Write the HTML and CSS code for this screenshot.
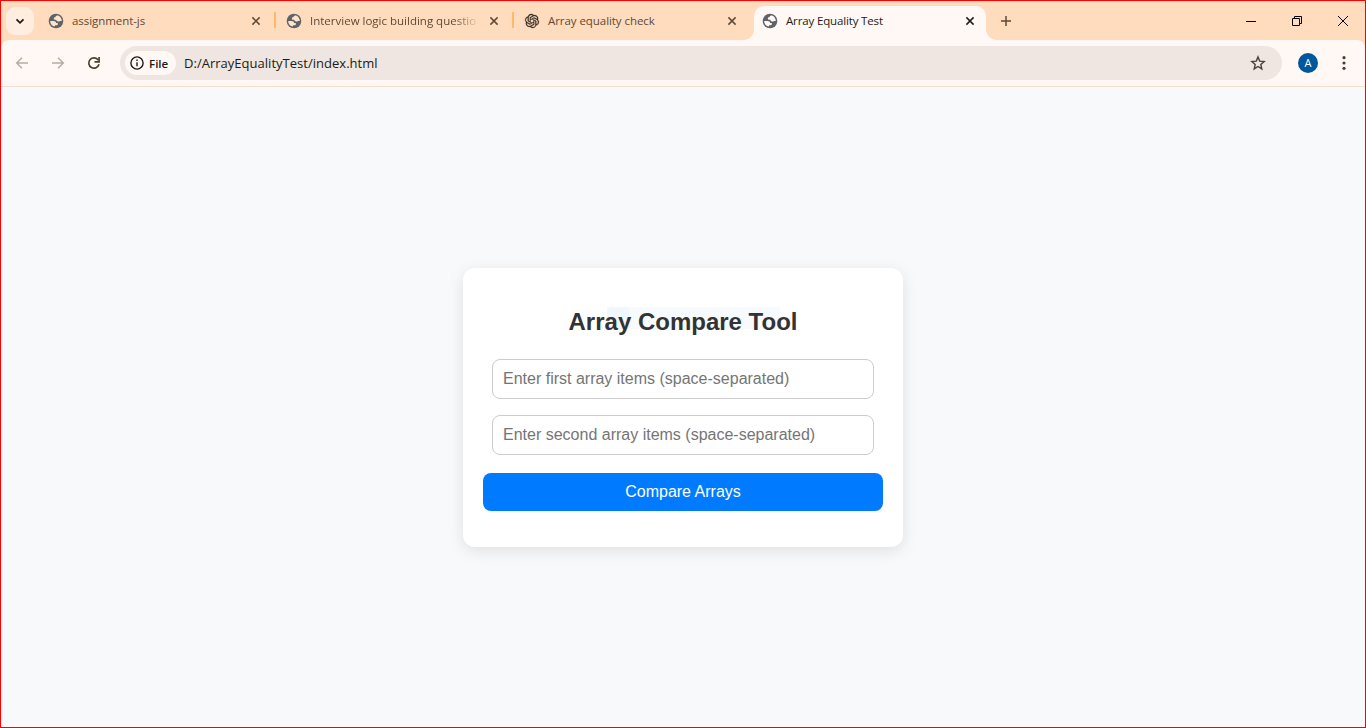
FILE: index.html
```html
<!DOCTYPE html>
<html lang="en">
<head>
<meta charset="utf-8">
<title>Array Equality Test</title>
<link rel="stylesheet" href="styles.css">
</head>
<body>
<svg class="defs" width="0" height="0">
  <symbol id="globe" viewBox="0 0 16 16">
    <circle cx="8" cy="8" r="7.300" fill="#5f6368"/>
    <path fill="currentColor" d="M10 2.500C8.500 2.500 7.500 3.100 7.400 4.200 6.300 4.200 5.800 4.700 5.800 5.500c0 .9.700 1.300 1.700 1.300.7 0 .9.300 1.100.8.300.8 1.200 1 2 1 .9 0 1.200-.5 2-.5h1.200c.1-2.300-1.500-4.900-3.800-5.600z"/>
    <path fill="currentColor" d="M2.200 8.100h3.300c1.700 0 2.500.7 2.600 1.900h1.700v1.200c0 .7-.5 1.100-1.200 1.100H7v1.300C4.500 13.400 2.200 11.300 2.200 8.100z"/>
  </symbol>
  <symbol id="close" viewBox="0 0 16 16"><path d="M4.400 4.400l7.200 7.200M11.600 4.400l-7.200 7.200" fill="none" stroke="currentColor" stroke-width="1.500"/></symbol>
</svg>
<div class="window">
  <header class="tabstrip">
    <button class="tab-search" aria-label="Search tabs"><svg width="16" height="16" viewBox="0 0 16 16"><path d="M4.500 6.300L8 9.800l3.500-3.500" fill="none" stroke="currentColor" stroke-width="1.800"/></svg></button>
    <div class="tabs">
      <div class="tab"><svg class="favicon"><use href="#globe"/></svg><span class="title t1">assignment-js</span><svg class="close"><use href="#close"/></svg></div>
      <div class="tab divided"><svg class="favicon"><use href="#globe"/></svg><span class="title t2">Interview logic building questio</span><svg class="close"><use href="#close"/></svg></div>
      <div class="tab divided"><svg class="favicon openai" viewBox="0 0 24 24"><path fill="currentColor" stroke="currentColor" stroke-width=".5" d="M22.2819 9.8211a5.9847 5.9847 0 0 0-.5157-4.9108 6.0462 6.0462 0 0 0-6.5098-2.9A6.0651 6.0651 0 0 0 4.9807 4.1818a5.9847 5.9847 0 0 0-3.9977 2.9 6.0462 6.0462 0 0 0 .7427 7.0966 5.98 5.98 0 0 0 .511 4.9107 6.051 6.051 0 0 0 6.5146 2.9001A5.9847 5.9847 0 0 0 13.2599 24a6.0557 6.0557 0 0 0 5.7718-4.2058 5.9894 5.9894 0 0 0 3.9977-2.9001 6.0557 6.0557 0 0 0-.7475-7.0729zm-9.022 12.6081a4.4755 4.4755 0 0 1-2.8764-1.0408l.1419-.0804 4.7783-2.7582a.7948.7948 0 0 0 .3927-.6813v-6.7369l2.02 1.1686a.071.071 0 0 1 .038.052v5.5826a4.504 4.504 0 0 1-4.4945 4.4944zm-9.6607-4.1254a4.4708 4.4708 0 0 1-.5346-3.0137l.142.0852 4.783 2.7582a.7712.7712 0 0 0 .7806 0l5.8428-3.3685v2.3324a.0804.0804 0 0 1-.0332.0615L9.74 19.9502a4.4992 4.4992 0 0 1-6.1408-1.6464zM2.3408 7.8956a4.485 4.485 0 0 1 2.3655-1.9728V11.6a.7664.7664 0 0 0 .3879.6765l5.8144 3.3543-2.0201 1.1685a.0757.0757 0 0 1-.071 0l-4.8303-2.7865A4.504 4.504 0 0 1 2.3408 7.872zm16.5963 3.8558L13.1038 8.364 15.1192 7.2a.0757.0757 0 0 1 .071 0l4.8303 2.7913a4.4944 4.4944 0 0 1-.6765 8.1042v-5.6772a.79.79 0 0 0-.407-.667zm2.0107-3.0231l-.142-.0852-4.7735-2.7818a.7759.7759 0 0 0-.7854 0L9.409 9.2297V6.8974a.0662.0662 0 0 1 .0284-.0615l4.8303-2.7866a4.4992 4.4992 0 0 1 6.6802 4.66zM8.3065 12.863l-2.02-1.1638a.0804.0804 0 0 1-.038-.0567V6.0742a4.4992 4.4992 0 0 1 7.3757-3.4537l-.142.0805L8.704 5.459a.7948.7948 0 0 0-.3927.6813zm1.0976-2.3654l2.602-1.4998 2.6069 1.4998v2.9994l-2.5974 1.4997-2.6067-1.4997Z"/></svg><span class="title t3">Array equality check</span><svg class="close"><use href="#close"/></svg></div>
      <div class="tab active"><svg class="favicon"><use href="#globe"/></svg><span class="title t4">Array Equality Test</span><svg class="close"><use href="#close"/></svg></div>
    </div>
    <svg class="new-tab" width="16" height="16" viewBox="0 0 16 16"><path d="M8 3v10M3 8h10" stroke="currentColor" stroke-width="1.500"/></svg>
    <div class="controls">
      <svg width="12" height="12" viewBox="0 0 12 12"><path d="M1 6.500h10" stroke="#000"/></svg>
      <svg width="12" height="12" viewBox="0 0 12 12"><path d="M1.500 3.500h7v7h-7zM3.500 3.500v-2h7v7h-2" fill="none" stroke="#000"/></svg>
      <svg width="12" height="12" viewBox="0 0 12 12"><path d="M1 1l10 10M11 1L1 11" stroke="#000"/></svg>
    </div>
  </header>
  <div class="toolbar">
    <div class="nav">
      <svg class="off" width="16" height="16" viewBox="0 0 16 16"><path d="M14 8H3M8 2.700L2.700 8 8 13.300" fill="none" stroke="currentColor" stroke-width="1.500"/></svg>
      <svg class="off" width="16" height="16" viewBox="0 0 16 16"><path d="M2 8h11M8 2.700L13.300 8 8 13.300" fill="none" stroke="currentColor" stroke-width="1.500"/></svg>
      <svg width="16" height="16" viewBox="0 0 16 16"><path d="M13 9.300A5.200 5.200 0 1 1 12.300 5.100" fill="none" stroke="currentColor" stroke-width="1.700"/><path d="M13.100 2v4.800H8.500" fill="none" stroke="currentColor" stroke-width="1.700"/></svg>
    </div>
    <div class="omnibox">
      <span class="chip"><svg width="16" height="16" viewBox="0 0 16 16"><circle cx="8" cy="8" r="6.100" fill="none" stroke="currentColor" stroke-width="1.400"/><path d="M8 7.200v4M8 4.600v1.500" stroke="currentColor" stroke-width="1.400"/></svg><span class="scheme">File</span></span>
      <span class="url">D:/ArrayEqualityTest/index.html</span>
      <svg class="star" width="18" height="18" viewBox="0 0 18 18"><path d="M9 2.900l1.700 4.200 4.500.4-3.400 3 1 4.400L9 12.500l-3.800 2.400 1-4.400-3.400-3 4.500-.4z" fill="none" stroke="currentColor" stroke-width="1.400"/></svg>
    </div>
    <span class="avatar">A</span>
    <svg class="menu" width="4" height="16" viewBox="0 0 4 16"><circle cx="2" cy="2.700" r="1.600"/><circle cx="2" cy="8" r="1.600"/><circle cx="2" cy="13.300" r="1.600"/></svg>
  </div>
  <main class="page">
    <section class="card">
      <h1><span class="ghost"></span><span class="heading">Array Compare Tool</span></h1>
      <input type="text" placeholder="Enter first array items (space-separated)">
      <input type="text" placeholder="Enter second array items (space-separated)">
      <button class="compare">Compare Arrays</button>
    </section>
  </main>
</div>
</body>
</html>
```
FILE: styles.css
```css
* { box-sizing: border-box; }
body { margin: 0; font-family: "Liberation Sans", Arial, sans-serif; }
button { border: 0; padding: 0; font: inherit; }
svg { display: block; flex: none; }
.defs { position: absolute; }

.window {
  width: 1366px;
  height: 728px;
  border: 1px solid #f00;
  display: flex;
  flex-direction: column;
  overflow: hidden;
  background: #ffdcbd;
}

.tabstrip {
  height: 39px;
  flex: none;
  display: flex;
  align-items: center;
  padding: 0 16px 0 5px;
  font: 11.5px "Open Sans", "Noto Sans", sans-serif;
  color: #5e4a37;
}
.tab-search {
  width: 28px;
  height: 28px;
  border-radius: 9px;
  background: #ffeddf;
  color: #201a15;
  display: grid;
  place-items: center;
}
.tabs { display: flex; align-self: stretch; padding-top: 5px; margin-left: 4px; }
.tab {
  width: 238px;
  height: 34px;
  display: flex;
  align-items: center;
  padding: 0 12px 5px 10px;
  position: relative;
}
.tab.active {
  width: 236px;
  padding-right: 10px;
  color: #241b14;
}
.tab.active::before {
  content: "";
  position: absolute;
  inset: 0 2px 0 2px;
  background: #fff8f5;
  border-radius: 10px 10px 0 0;
}
.tab.active::after {
  content: "";
  position: absolute;
  left: -8px;
  right: -8px;
  bottom: 0;
  height: 10px;
  background:
    radial-gradient(circle at 0 0, transparent 9.500px, #fff8f5 10px) left / 10px 10px no-repeat,
    radial-gradient(circle at 100% 0, transparent 9.500px, #fff8f5 10px) right / 10px 10px no-repeat;
}
.tab > * { position: relative; z-index: 1; }
.tab.divided::before {
  content: "";
  position: absolute;
  left: -2px;
  top: 6px;
  width: 2px;
  height: 16px;
  background: #ffb968;
}
.favicon { width: 16px; height: 16px; color: #ffe4cb; }
.favicon.openai { width: 14px; height: 14px; margin: 0 1px; color: #352b22; overflow: visible; }
.active .favicon { color: #fff8f5; }
.title { flex: 1; margin-left: 8px; white-space: nowrap; line-height: 18px; }
.t1, .t3 { letter-spacing: -.06px; }
.t2 { -webkit-mask-image: linear-gradient(90deg, #000 144px, transparent 170px); mask-image: linear-gradient(90deg, #000 144px, transparent 170px); }
.t4 { letter-spacing: -.15px; }
.close { width: 16px; height: 16px; margin-left: 10px; }
.new-tab { margin-left: 10px; }
.controls { margin-left: auto; display: flex; gap: 34px; }

.toolbar {
  height: 47px;
  flex: none;
  background: #fff8f5;
  border-bottom: 1px solid #f3dfcf;
  border-radius: 8px 8px 0 0;
  display: flex;
  align-items: center;
  padding: 0 19px 0 13px;
  color: #4d3f30;
}
.nav { display: flex; gap: 20px; }
.off { color: #b9aca4; }
.omnibox {
  width: 1162px;
  height: 34px;
  border-radius: 17px;
  margin-left: 18px;
  background: #efe6e1;
  display: flex;
  align-items: center;
  padding: 0 15px 0 5px;
  font: 13px "Open Sans", "Noto Sans", sans-serif;
  color: #211a16;
}
.chip {
  height: 24px;
  width: 51px;
  border-radius: 12px;
  background: #fff8f5;
  display: flex;
  align-items: center;
  padding-left: 4px;
  gap: 4px;
  font-size: 11.500px;
  font-weight: 600;
}
.url { margin-left: 8px; letter-spacing: .02px; }
.star { margin-left: auto; color: #4a3f3a; }
.avatar {
  width: 20px;
  height: 20px;
  border-radius: 50%;
  margin-left: 16px;
  background: #01579b;
  color: #fff;
  font: 11px/20px "Open Sans", sans-serif;
  text-align: center;
}
.menu { margin-left: 24px; fill: #4d3f30; }

.page {
  flex: 1;
  background: #f7f9fb;
  display: flex;
  justify-content: center;
  align-items: center;
}
.card {
  width: 440px;
  height: 279px;
  background: #fff;
  border-radius: 12px;
  box-shadow: 0 4px 16px rgba(0, 0, 0, .1);
  padding: 40px 20px 0;
  display: flex;
  flex-direction: column;
  align-items: center;
}
h1 {
  margin: 0 0 23px;
  font-size: 24px;
  line-height: 28px;
  font-weight: bold;
  color: #333;
  position: relative;
}
.heading { position: relative; }
.ghost {
  position: absolute;
  left: 38px;
  top: -1px;
  width: 173px;
  height: 22px;
  background: linear-gradient(90deg, #f0f7fe 22px, #f7fbfe 22px);
}
input {
  width: 382px;
  height: 40px;
  margin: 0 0 16px;
  border: 1px solid #ccc;
  border-radius: 8px;
  padding: 0 10px;
  font: 16px "Liberation Sans", Arial, sans-serif;
  background: #fff;
}
input::placeholder { color: #757575; }
.compare {
  width: 400px;
  height: 38px;
  margin-top: 2px;
  border-radius: 8px;
  background: #007bff;
  color: #fff;
  font-size: 16px;
}
```
